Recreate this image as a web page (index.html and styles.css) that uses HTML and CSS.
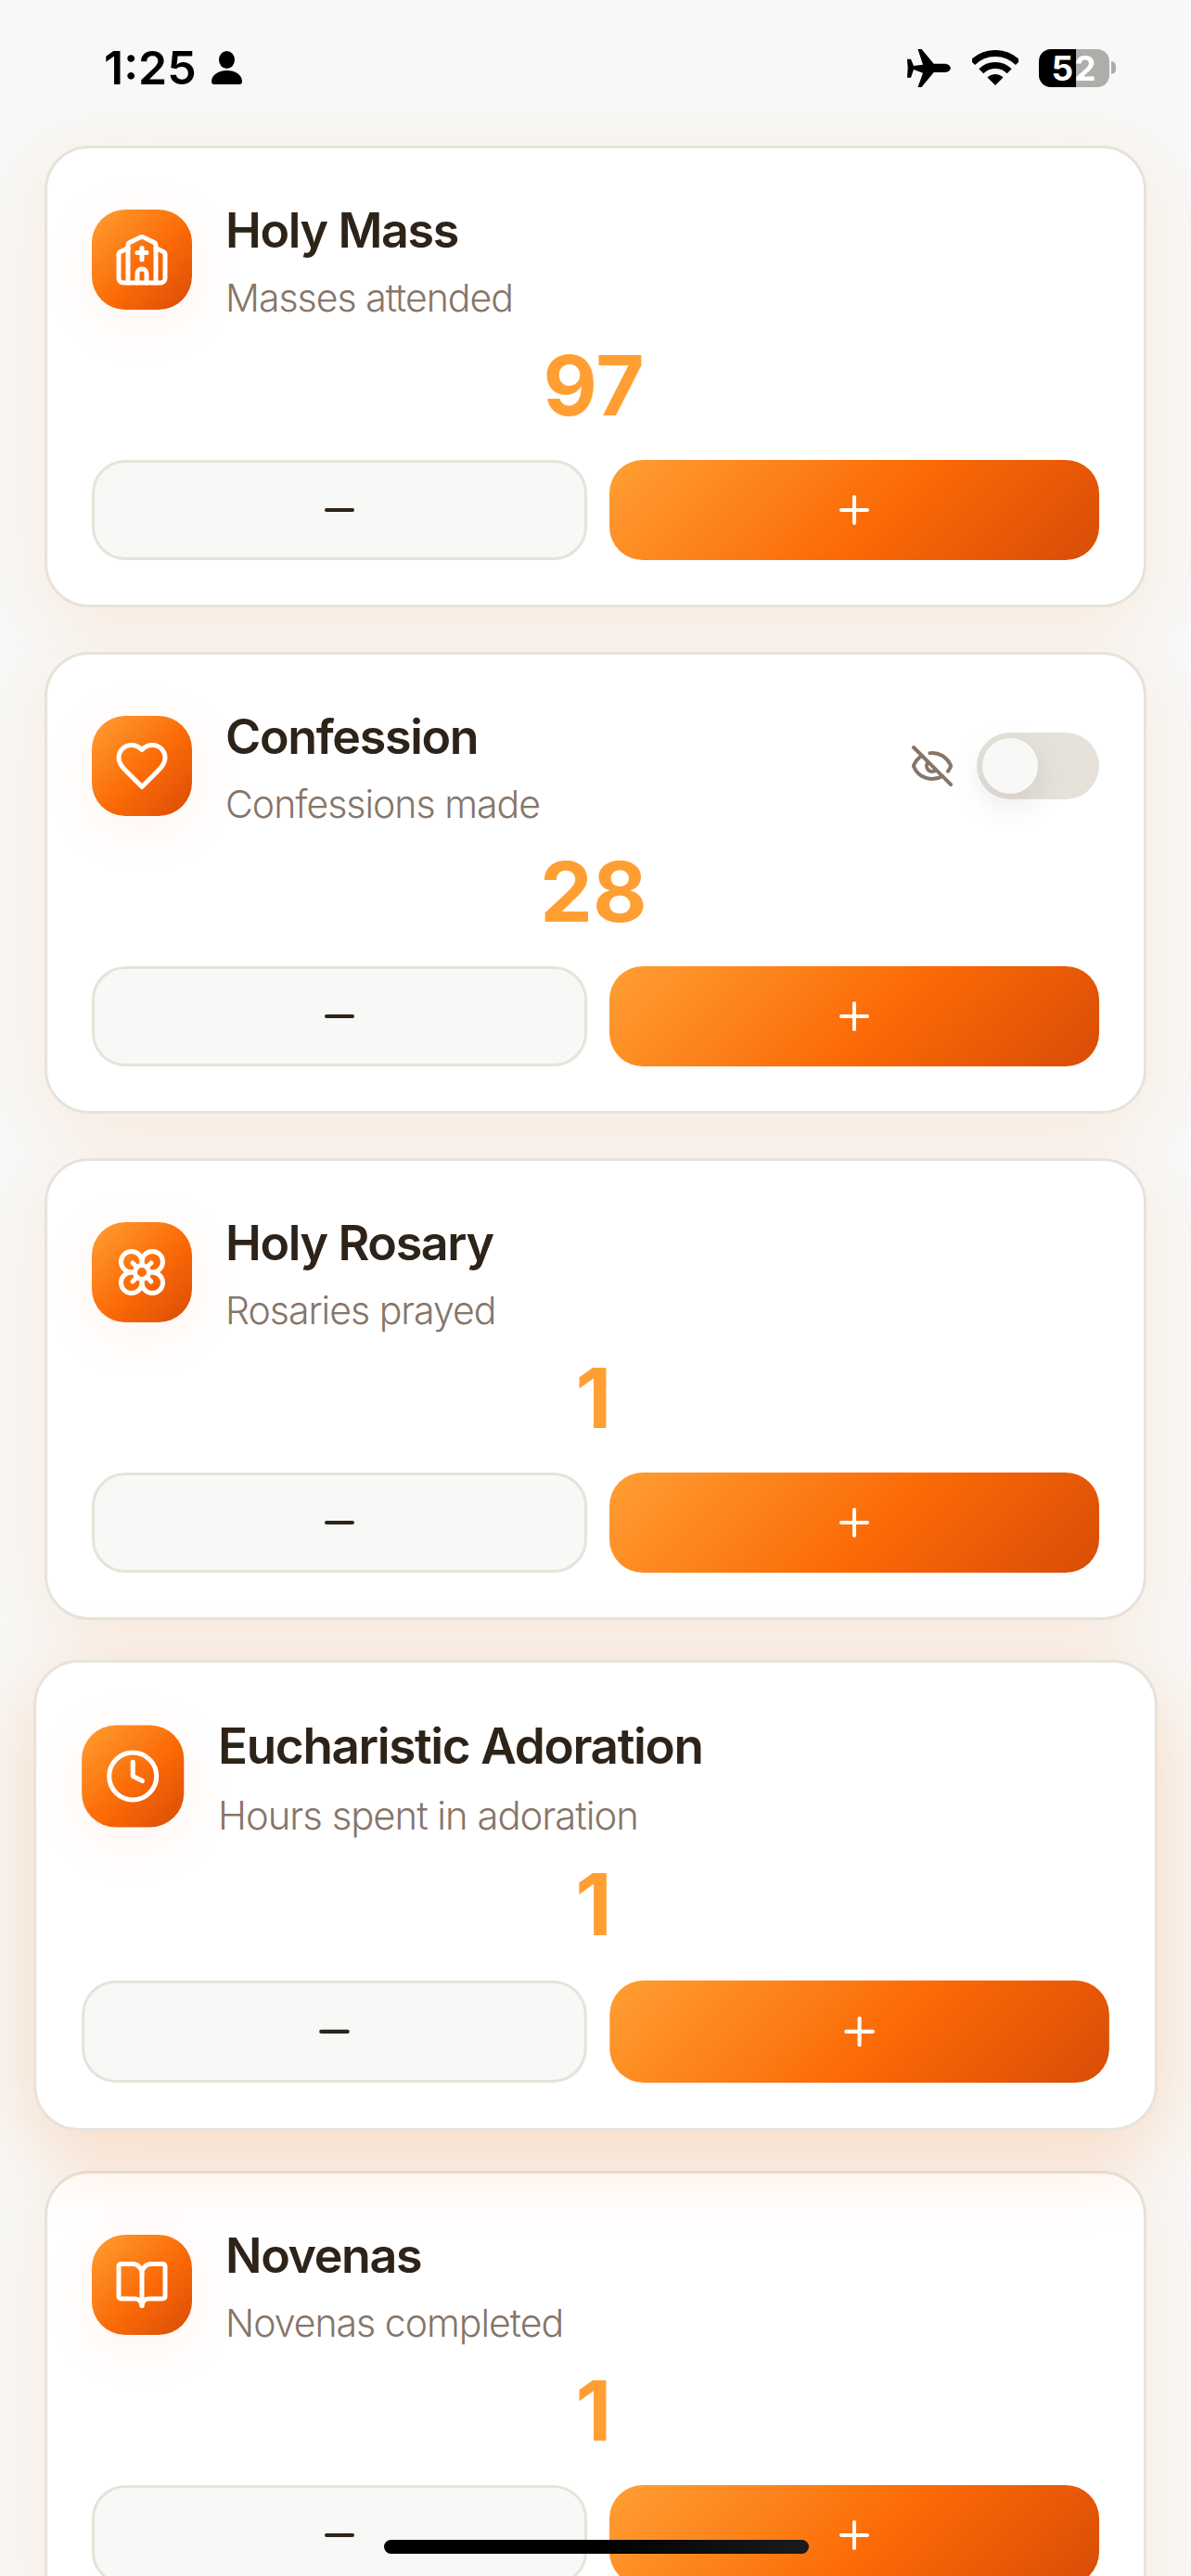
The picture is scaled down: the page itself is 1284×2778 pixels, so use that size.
FILE: index.html
```html
<!doctype html>
<html lang="en">
<head>
<meta charset="utf-8">
<meta name="viewport" content="width=device-width,initial-scale=1">
<title>devotions</title>
<link rel="stylesheet" href="styles.css">
</head>
<body>

	<div class="status">
		<div class="statusLeft">
			<span class="time">1:25</span>
			<svg class="person" viewBox="0 0 33 36"><ellipse cx="16.5" cy="9.5" rx="8.5" ry="9.5"/><path d="M0 33C0 26 7 21 16.5 21S33 26 33 33q0 3-3 3H3q-3 0-3-3Z"/></svg>
		</div>
		<div class="statusRight">
			<svg class="plane" viewBox="0 0 47 41"><path d="M28.7 15.7H40C44 15.7 46.8 18 46.8 20.4S44 25 40 25H28.7L15.5 41H11.5L17 25.7 7 22 4 30.7H0L.7 20.4 0 10.7H4L7 18 17 16.7 11.5 0H15.5Z"/></svg>
			<svg class="wifi" viewBox="0 0 50 38"><path class="wifiArc" d="M.6 13.6A34.5 34.5 0 0 1 49.4 13.6"/><path class="wifiArc" d="M9.8 22.8A21.5 21.5 0 0 1 40.2 22.8"/><path d="M25 38 16.5 29.5A12 12 0 0 1 33.5 29.5Z"/></svg>
			<div class="battery"><span class="batteryText">52</span></div>
			<div class="batteryCap"></div>
		</div>
	</div>

	<div class="list">

		<div class="card">
			<div class="cardHead">
				<div class="badge">
					<svg class="line" viewBox="0 0 24 24"><path d="M10 9h4"/><path d="M12 7v5"/><path d="M14 22v-4a2 2 0 0 0-4 0v4"/><path d="M18 22V5.618a1 1 0 0 0-.553-.894l-4.553-2.277a2 2 0 0 0-1.788 0L6.553 4.724A1 1 0 0 0 6 5.618V22"/><path d="m18 7 3.447 1.724a1 1 0 0 1 .553.894V20a2 2 0 0 1-2 2H4a2 2 0 0 1-2-2V9.618a1 1 0 0 1 .553-.894L6 7"/></svg>
				</div>
				<div class="cardText">
					<div class="cardTitle">Holy Mass</div>
					<div class="cardSub">Masses attended</div>
				</div>
			</div>
			<div class="count">97</div>
			<div class="buttons">
				<div class="btn btnMinus"><svg class="line" viewBox="0 0 24 24"><path d="M5 12h14"/></svg></div>
				<div class="btn btnPlus"><svg class="line" viewBox="0 0 24 24"><path d="M5 12h14"/><path d="M12 5v14"/></svg></div>
			</div>
		</div>

		<div class="card">
			<div class="cardHead">
				<div class="badge">
					<svg class="line" viewBox="0 0 24 24"><path d="M19 14c1.49-1.46 3-3.21 3-5.5A5.5 5.5 0 0 0 16.5 3c-1.76 0-3 .5-4.5 2-1.5-1.5-2.74-2-4.5-2A5.5 5.5 0 0 0 2 8.5c0 2.3 1.5 4.05 3 5.5l7 7Z"/></svg>
				</div>
				<div class="cardText">
					<div class="cardTitle">Confession</div>
					<div class="cardSub">Confessions made</div>
				</div>
				<div class="hideRow">
					<svg class="line eyeOff" viewBox="0 0 24 24"><path d="M10.733 5.076a10.744 10.744 0 0 1 11.205 6.575 1 1 0 0 1 0 .696 10.747 10.747 0 0 1-1.444 2.49"/><path d="M14.084 14.158a3 3 0 0 1-4.242-4.242"/><path d="M17.479 17.499a10.75 10.75 0 0 1-15.417-5.151 1 1 0 0 1 0-.696 10.75 10.75 0 0 1 4.446-5.143"/><path d="m2 2 20 20"/></svg>
					<div class="toggle"><div class="thumb"></div></div>
				</div>
			</div>
			<div class="count">28</div>
			<div class="buttons">
				<div class="btn btnMinus"><svg class="line" viewBox="0 0 24 24"><path d="M5 12h14"/></svg></div>
				<div class="btn btnPlus"><svg class="line" viewBox="0 0 24 24"><path d="M5 12h14"/><path d="M12 5v14"/></svg></div>
			</div>
		</div>

		<div class="card">
			<div class="cardHead">
				<div class="badge">
					<svg class="line" viewBox="0 0 24 24"><circle cx="12" cy="12" r="3"/><path d="M12 16.5A4.5 4.5 0 1 1 7.5 12 4.5 4.5 0 1 1 12 7.5a4.5 4.5 0 1 1 4.5 4.5 4.5 4.5 0 1 1-4.5 4.5"/><path d="M12 7.5V9"/><path d="M7.5 12H9"/><path d="M16.5 12H15"/><path d="M12 16.5V15"/><path d="m8 8 1.88 1.88"/><path d="M14.12 9.88 16 8"/><path d="m8 16 1.88-1.88"/><path d="M14.12 14.12 16 16"/></svg>
				</div>
				<div class="cardText">
					<div class="cardTitle">Holy Rosary</div>
					<div class="cardSub">Rosaries prayed</div>
				</div>
			</div>
			<div class="count">1</div>
			<div class="buttons">
				<div class="btn btnMinus"><svg class="line" viewBox="0 0 24 24"><path d="M5 12h14"/></svg></div>
				<div class="btn btnPlus"><svg class="line" viewBox="0 0 24 24"><path d="M5 12h14"/><path d="M12 5v14"/></svg></div>
			</div>
		</div>

		<!-- this one is being dragged -->
		<div class="card cardLifted">
			<div class="cardHead">
				<div class="badge">
					<svg class="line" viewBox="0 0 24 24"><circle cx="12" cy="12" r="10"/><path d="M12 6v6l4 2"/></svg>
				</div>
				<div class="cardText">
					<div class="cardTitle">Eucharistic Adoration</div>
					<div class="cardSub">Hours spent in adoration</div>
				</div>
			</div>
			<div class="count">1</div>
			<div class="buttons">
				<div class="btn btnMinus"><svg class="line" viewBox="0 0 24 24"><path d="M5 12h14"/></svg></div>
				<div class="btn btnPlus"><svg class="line" viewBox="0 0 24 24"><path d="M5 12h14"/><path d="M12 5v14"/></svg></div>
			</div>
		</div>

		<div class="card">
			<div class="cardHead">
				<div class="badge">
					<svg class="line" viewBox="0 0 24 24"><path d="M12 7v14"/><path d="M3 18a1 1 0 0 1-1-1V4a1 1 0 0 1 1-1h5a4 4 0 0 1 4 4 4 4 0 0 1 4-4h5a1 1 0 0 1 1 1v13a1 1 0 0 1-1 1h-6a3 3 0 0 0-3 3 3 3 0 0 0-3-3z"/></svg>
				</div>
				<div class="cardText">
					<div class="cardTitle">Novenas</div>
					<div class="cardSub">Novenas completed</div>
				</div>
			</div>
			<div class="count">1</div>
			<div class="buttons">
				<div class="btn btnMinus"><svg class="line" viewBox="0 0 24 24"><path d="M5 12h14"/></svg></div>
				<div class="btn btnPlus"><svg class="line" viewBox="0 0 24 24"><path d="M5 12h14"/><path d="M12 5v14"/></svg></div>
			</div>
		</div>

	</div>

	<div class="homeBar"></div>

</body>
</html>
```
FILE: styles.css
```css
	html { --ink: #2e2319; --muted: #877568; --edge: #e7e3da; --paper: #f8f8f6; --count: #ff9f33;
		--hot: linear-gradient( 135deg, #ff9f33 0%, #fb6a06 55%, #d84c08 100% ); }

	html, body { height: 100vh; margin: 0; overflow: hidden; }

	body { background-color: var( --paper ); color: var( --ink ); font-family: Inter, "Liberation Sans", sans-serif; position: relative; }

	.status { align-items: center; box-sizing: border-box; display: flex; height: 157px; justify-content: space-between; padding: 0 81px 11px 112px; }
	.statusLeft, .statusRight { align-items: center; display: flex; }
	.time { color: #000; font-size: 50px; font-weight: 600; letter-spacing: 0; line-height: 60px; }
	.person { height: 36px; margin-left: 16px; width: 33px; }
	.plane { height: 41px; width: 47px; }
	.wifi { height: 38px; margin-left: 23px; width: 50px; }
	.wifiArc { fill: none; stroke: #000; stroke-width: 7; }
	.battery { background: linear-gradient( 90deg, #000 52%, #adadab 52% ); border-radius: 13px; color: #fff; font-size: 37px; font-weight: 700;
		height: 41px; line-height: 41px; margin-left: 22px; text-align: center; width: 76px; }
	.batteryText { letter-spacing: 1px; }
	.batteryCap { background-color: #adadab; border-radius: 0 7px 7px 0; height: 14px; margin-left: 2px; width: 5px; }

	.list { display: flex; flex-direction: column; gap: 48px; padding: 0 48px; }

	.card { background-color: #fff; border: 3px solid var( --edge ); border-radius: 48px; box-shadow: 0 18px 72px rgba( 255, 107, 0, .1 ); box-sizing: border-box;
		flex: none; height: 498px; padding: 48px; }
	.cardLifted { box-shadow: 0 24px 84px rgba( 255, 107, 0, .22 ); position: relative; transform: scale( 1.02 ); z-index: 2; }

	.cardHead { align-items: center; display: flex; height: 144px; }
	.badge { align-items: center; background: var( --hot ); border-radius: 36px; box-shadow: 0 12px 60px rgba( 255, 107, 0, .08 ); color: #fff; display: flex;
		flex: none; height: 108px; justify-content: center; margin-right: 36px; width: 108px; }
	.badge .line { height: 60px; width: 60px; }

	.line { fill: none; stroke: currentColor; stroke-linecap: round; stroke-linejoin: round; stroke-width: 2; }

	.cardText { flex: 1; padding-top: 4px; }
	.cardTitle { font-size: 52px; font-weight: 600; letter-spacing: -1.35px; line-height: 72px; }
	.cardSub { color: var( --muted ); font-size: 41px; font-weight: 300; letter-spacing: -1px; line-height: 60px; margin-top: 6px; }

	.hideRow { align-items: center; display: flex; gap: 24px; }
	.eyeOff { color: var( --muted ); height: 48px; width: 48px; }
	.toggle { background-color: #e6e2da; border-radius: 36px; box-sizing: border-box; height: 72px; padding: 6px; width: 132px; }
	.thumb { background-color: var( --paper ); border-radius: 50%; box-shadow: 0 12px 36px rgba( 0, 0, 0, .1 ); height: 60px; width: 60px; }

	.count { color: var( --count ); font-size: 90px; font-weight: 700; line-height: 108px; margin-top: 10px; padding-right: 4px; text-align: center; }

	.buttons { display: flex; gap: 24px; margin-top: 26px; }
	.btn { align-items: center; border-radius: 36px; box-sizing: content-box; display: flex; flex: 1; height: 108px; justify-content: center; }
	.btn .line { height: 48px; width: 48px; }
	.btnMinus { background-color: var( --paper ); border: 3px solid var( --edge ); color: var( --ink ); height: 102px; }
	.btnPlus { background: var( --hot ); color: #fff; }

	.homeBar { background: linear-gradient( 90deg, #000 50%, #1c1c1c 100% ); border-radius: 8px; bottom: 24px; height: 15px; left: 414px; position: absolute; width: 458px; z-index: 3; }
```
